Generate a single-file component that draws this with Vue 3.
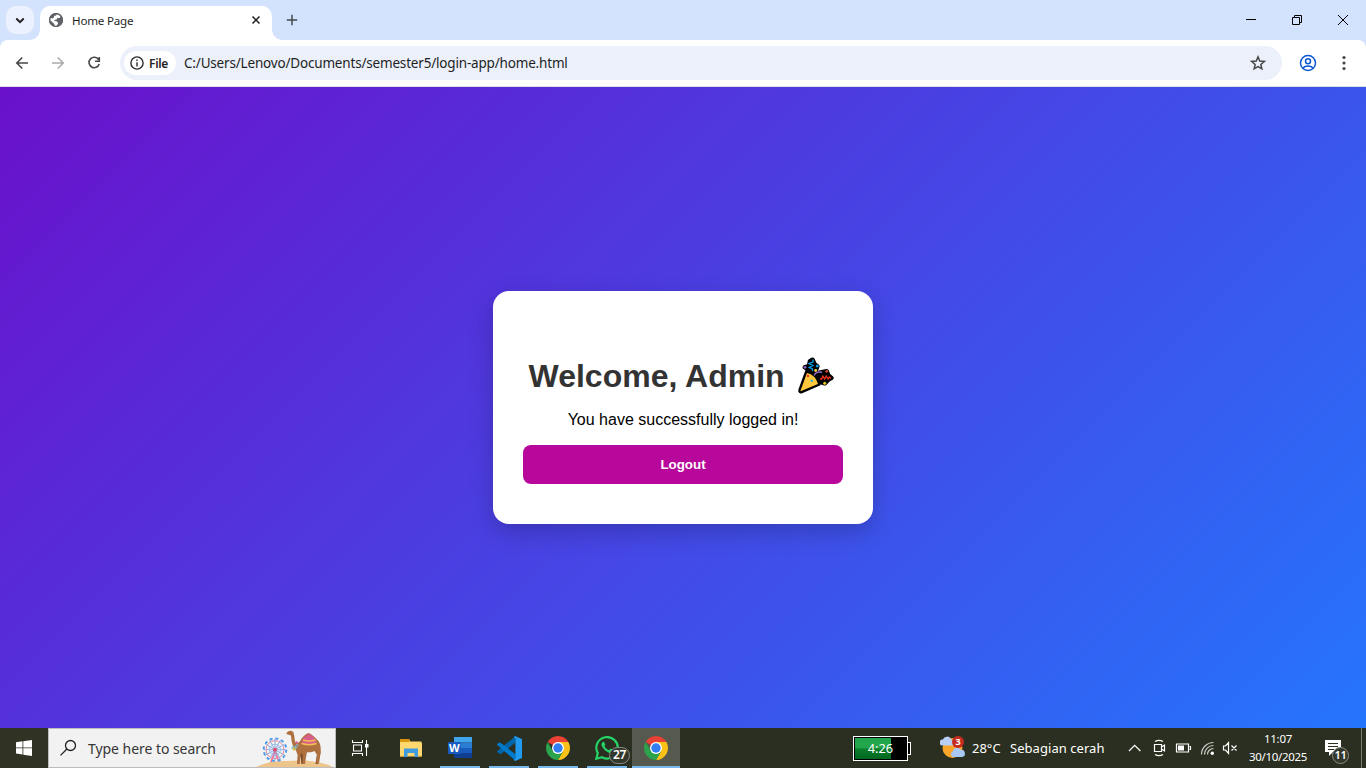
<script setup>
const spokes = Array.from({ length: 12 }, (_, i) => i * 30)
</script>

<template>
  <div class="screen">
    <header class="tabstrip">
      <button class="tabsearch"><svg width="28" height="34" viewBox="0 0 28 34"><path d="M10.300 15.500l3.700 3.700 3.700-3.700" fill="none" stroke="#1f1f1f" stroke-width="1.900" /></svg></button>
      <div class="tab">
        <svg class="globe" width="16" height="16" viewBox="0 0 16 16"><circle cx="8" cy="8" r="7" fill="#5f6368" /><path d="M9.4 1.8l3.3 2-1 2.1-2.4.2-.9 1.6-2 .1.1 1.3 2.1.1 1.5 1.5-.7 2-1.6 1.9-1.4-.2.1-2.2-1.5-1.4L1.9 8l.6-2 2 .5 1.6-1.3-.1-1.3 2-.3z" fill="#fff" /><circle cx="8" cy="8" r="6.4" fill="none" stroke="#5f6368" stroke-width="1.3" /></svg>
        <span class="tabtitle">Home Page</span>
        <svg class="tabclose" width="10" height="10" viewBox="0 0 10 10"><path d="M1.500 1.500l7 7M8.500 1.500l-7 7" stroke="#1f1f1f" stroke-width="1.500" /></svg>
      </div>
      <svg class="plus" width="12" height="12" viewBox="0 0 12 12"><path d="M6 .8v10.400M.8 6h10.400" stroke="#45494e" stroke-width="1.500" /></svg>
      <div class="winctl">
        <svg width="46" height="40" viewBox="0 0 46 40"><path d="M18 19.500h10" stroke="#000" /></svg>
        <svg width="46" height="40" viewBox="0 0 46 40"><path d="M18.500 17.500h7v7h-7zM20.500 17.500v-2h7v7h-2" fill="none" stroke="#000" /></svg>
        <svg width="46" height="40" viewBox="0 0 46 40"><path d="M18 15l10 10M28 15L18 25" stroke="#000" /></svg>
      </div>
    </header>

    <nav class="toolbar">
      <svg class="nav" width="36" height="46" viewBox="0 0 36 46"><path d="M28 23H17M22.300 17.500L16.800 23l5.500 5.500" transform="translate(-4 0)" fill="none" stroke="#474747" stroke-width="1.600" /></svg>
      <svg class="nav" width="36" height="46" viewBox="0 0 36 46"><path d="M12 23h11M17.700 17.500L23.200 23l-5.500 5.500" fill="none" stroke="#ababab" stroke-width="1.600" /></svg>
      <svg class="nav" width="36" height="46" viewBox="0 0 36 46"><path d="M22.600 19.700A5.200 5.200 0 1 0 23.200 24M23.300 17v4.300H19" fill="none" stroke="#474747" stroke-width="1.600" /></svg>
      <div class="omnibox">
        <div class="chip">
          <svg width="14" height="14" viewBox="0 0 14 14"><circle cx="7" cy="7" r="6.100" fill="none" stroke="#2b2b2b" stroke-width="1.400" /><path d="M7 6.200v4.200M7 3.500v1.500" stroke="#2b2b2b" stroke-width="1.400" /></svg>
          <span>File</span>
        </div>
        <span class="url">C:/Users/Lenovo/Documents/semester5/login-app/home.html</span>
        <svg class="star" width="16" height="16" viewBox="0 0 16 16"><path d="M8 1.900l1.750 4.150 4.500.4-3.400 2.950 1 4.400L8 11.500l-3.850 2.300 1-4.400-3.400-2.950 4.500-.4z" fill="none" stroke="#474747" stroke-width="1.500" /></svg>
      </div>
      <svg class="person" width="18" height="18" viewBox="0 0 18 18"><g fill="none" stroke="#0b57d0" stroke-width="1.500"><circle cx="9" cy="9" r="7.500" /><circle cx="9" cy="7.300" r="2.500" /><path d="M3.700 14.200c1.400-1.500 3.200-2.200 5.300-2.200s3.900.7 5.300 2.200" /></g></svg>
      <svg class="dots" width="4" height="16" viewBox="0 0 4 16"><g fill="#474747"><circle cx="2" cy="2.500" r="1.600" /><circle cx="2" cy="8" r="1.600" /><circle cx="2" cy="13.500" r="1.600" /></g></svg>
    </nav>

    <main class="page">
      <section class="card">
        <h1>Welcome, Admin <svg class="party" width="37" height="38" viewBox="0 0 37 38">
          <g stroke="#000" stroke-linejoin="round" stroke-linecap="round" fill="#000">
            <path d="M8 10.300l4-1 1-5 2.500-1.500 2 4.500 2.800 2-1.600 4.400-4 2z" stroke-width="4.600" />
            <path d="M18 18l5.500-2.600 6.200-1.100 1.500 4L34.300 21l-2.800 1.300-3.800 4-4.500-1.500z" stroke-width="4.600" />
            <path d="M9.200 14.500L2.500 33c-.5 1.700.7 2.700 2.200 2.100L22.500 27.500C20.500 20.500 15.500 15.500 9.200 14.500z" fill="#ffc83d" stroke-width="2.300" />
          </g>
          <path d="M16 2.500v2.500l-4 1.500 4 2-3.800 2 3.300 1.500v2" fill="none" stroke="#00a6ed" stroke-width="1.300" />
          <path d="M17.200 18.500c.8-2.700 4-4 8-3.300" fill="none" stroke="#8d65c5" stroke-width="1.500" />
          <path d="M23 22h1.700l1.200-2.800 1.800 2.800 1.500-3 1.900 3 1.200-2 1.700 1.500" fill="none" stroke="#f92f20" stroke-width="1.300" />
          <circle cx="8" cy="10.300" r="1.400" fill="#8d65c5" /><circle cx="20.300" cy="9.100" r="1.400" fill="#00a6ed" /><circle cx="18.700" cy="13.500" r="1.400" fill="#fcd53f" /><circle cx="29.700" cy="14.300" r="1.400" fill="#d3462c" /><circle cx="27.700" cy="26.200" r="1.500" fill="#e5cb22" /><circle cx="11" cy="18.900" r="1.200" fill="#f92f20" /><circle cx="14.700" cy="23.800" r="1.200" fill="#26b5dd" />
        </svg></h1>
        <p>You have successfully logged in!</p>
        <button class="logout">Logout</button>
      </section>
    </main>

    <footer class="taskbar">
      <div class="cell start"><svg width="16" height="16" viewBox="0 0 16 16"><path d="M0 2.200L6.500 1.300V7.500H0zM7.300 1.200L16 0v7.500H7.300zM0 8.300h6.500v6.200L0 13.600zM7.300 8.300H16V16l-8.700-1.300z" fill="#fff" /></svg></div>
      <div class="search">
        <svg class="lens" width="18" height="18" viewBox="0 0 18 18"><circle cx="10.500" cy="6.500" r="5" fill="none" stroke="#222" stroke-width="1.300" /><path d="M6.900 10L.5 16.400" stroke="#222" stroke-width="1.300" /></svg>
        <span>Type here to search</span>
        <svg class="scene" width="78" height="38" viewBox="0 0 78 38">
          <path d="M14 36l5-14 5 14" fill="none" stroke="#ef6b8d" stroke-width="1.600" />
          <path d="M0 38c9-4 18-6.500 30-6 12-1 24-1 33 1.500 6 1 11 3 14 4.500z" fill="#edc48a" />
          <g fill="none"><circle cx="19" cy="20.700" r="9" stroke="#ef8a9e" stroke-width="1" /><circle cx="19" cy="20.700" r="5.500" stroke="#8cbdec" stroke-width=".8" /><circle cx="19" cy="20.700" r="11.300" stroke="#4c9deb" stroke-width="2" stroke-dasharray="3 2.920" /><path v-for="a in spokes" :key="a" d="M19 9.700V20" stroke="#7fa4e2" stroke-width=".8" :transform="`rotate(${a} 19 20.700)`" /></g>
          <circle cx="19" cy="20.700" r="2" fill="#e04a6a" />
          <path d="M58 18l3 7-1.500 10h2.500l2.500-11-1-8zM43 20l2.500 15h2.500l-1-13z" fill="#7d4a28" />
          <path d="M30.300 5c.5-2.500 3-3.500 5-3.300l2 1.200 1 4 .7 6c1 2 3 1.500 5-1 2-4 5.500-7 8.500-8 3 1 6 4 9 7 3 3 3.700 8 3 13l-1.500 10.600h-2.800L61 26l-2.500-4c-2 1.200-5 1.500-7.500 1.200l-1 5-1 6.800h-2.600l.3-8-1-3.500-1.500 4-.4 7.500H41l.6-9-1.600-4.500c-3-3-4.700-8-5-15z" fill="#ae703f" />
          <path d="M45.500 14.500c1-5 4-8.500 7.500-9.500 4 1.500 7 4.500 7.500 9.500-5 2-10.500 2-15 0z" fill="#d9608a" /><path d="M47 11c4 1.500 8 1.500 12.500 0M45.600 14.500c5 1.600 10 1.600 15 0" fill="none" stroke="#f0bf55" stroke-width="1.500" />
          <path d="M36 18c2 1.500 4.500.5 5.500-2.500" fill="none" stroke="#7cbcd6" stroke-width="3" stroke-dasharray="2 1" /><circle cx="38" cy="20" r="1.600" fill="#d8c44c" /><circle cx="40.500" cy="13.500" r="1.300" fill="#dc5c8b" />
        </svg>
      </div>
      <div class="cell"><svg width="18" height="16" viewBox="0 0 18 16"><g fill="none" stroke="#fff"><path d="M1.500 0v2.500h10V0M1.500 16v-2.500h10V16M2.500 5h8v6h-8zM15.500 0v16" stroke-width="1.100" /></g><path d="M14 4h3.500v3.500H14z" fill="#fff" /></svg></div>
      <div class="apps">
        <div class="cell"><svg width="24" height="24" viewBox="0 0 24 24"><path d="M1 3.500h9l1.500 2H22.500v15H1z" fill="#ffd667" /><path d="M1 3h9.500v3H1z" fill="#d9970f" /><path d="M1 7h22v13H1z" fill="#ffd96f" /><path d="M5 12.500h14v8.500h-3.500v-4h-7v4H5z" fill="#3e9be0" /><path d="M1 19.500h4v1H1zM19 19.500h4v1h-4z" fill="#f2bd43" /></svg></div>
        <div class="cell open"><svg width="24" height="24" viewBox="0 0 24 24"><path d="M6 1h18v5.500H6z" fill="#41a5ee" /><path d="M6 6.500h18V12H6z" fill="#2b7cd3" /><path d="M6 12h18v5H6z" fill="#185abd" /><path d="M6 17h18v5H6z" fill="#103f91" /><rect y="6" width="12.500" height="12" rx="1" fill="#185abd" /><text x="6.200" y="16" class="wordmark" text-anchor="middle">W</text></svg></div>
        <div class="cell open"><svg width="25" height="25" viewBox="0 0 24 24"><path d="M17.500.2v6.300L3.600 17.600 0 15.600v-1z" fill="#0065a9" /><path d="M0 7.600L2.800 6l15 11.500v6.300L0 8.500z" fill="#007acc" /><path d="M17.500.1L24 3v18l-6.500 2.900-1.500-.8 1.700-1.500V2.200L16 1z" fill="#1f9cf0" /></svg></div>
        <div class="cell open"><svg width="24" height="24" viewBox="0 0 24 24"><path d="M12 12L1.610 6A12 12 0 0 1 22.390 6z" fill="#e94235" /><path d="M12 6h10.390A12 12 0 0 1 12 24l5.200-9z" fill="#fbc116" /><path d="M6.800 15L1.610 6A12 12 0 0 0 12 24l5.200-9z" fill="#2ba24c" /><circle cx="12" cy="12" r="6" fill="#fff" /><circle cx="12" cy="12" r="4.700" fill="#317ef3" /></svg></div>
        <div class="cell open wa"><svg width="24" height="24" viewBox="0 0 24 24"><path d="M1.300 22.700l1.500-5.600A10.700 10.700 0 1 1 7 21.200z" fill="none" stroke="#25d366" stroke-width="2.200" /><path d="M7.400 6.300c.7-.8 1.600-.7 2 .2l.8 1.900c.2.500-.2 1.100-.8 1.700 1 2 2.500 3.400 4.500 4.200l1.100-1.300c.3-.4.7-.4 1.200-.2l2 1c.8.4.3 2.100-.7 2.800-1.700 1.200-5.200-.1-7.800-2.700-2.800-2.700-4.300-5.600-2.300-7.600z" fill="#25d366" /></svg><span class="count">27</span></div>
        <div class="cell open active"><svg width="24" height="24" viewBox="0 0 24 24"><path d="M12 12L1.610 6A12 12 0 0 1 22.390 6z" fill="#e94235" /><path d="M12 6h10.390A12 12 0 0 1 12 24l5.200-9z" fill="#fbc116" /><path d="M6.800 15L1.610 6A12 12 0 0 0 12 24l5.200-9z" fill="#2ba24c" /><circle cx="12" cy="12" r="6" fill="#fff" /><circle cx="12" cy="12" r="4.700" fill="#317ef3" /></svg></div>
      </div>
      <div class="battery"><div class="shell"><span>4:26</span></div><i></i></div>
      <div class="weather">
        <svg width="26" height="24" viewBox="0 0 26 24"><circle cx="12.500" cy="12" r="10" fill="#f8a52b" /><path d="M2.500 9.500a3 3 0 0 1 .4-6 4.500 4.500 0 0 1 8-.8l2 2v4.800z" fill="#b8cef5" /><path d="M13 21a3 3 0 0 1 0-5.700 4 4 0 0 1 7.500-1.500 3.500 3.500 0 1 1 1.500 7.200z" fill="#a9c8f5" /><circle cx="18" cy="6" r="6" fill="#c52b1e" /><text x="18" y="9.300" class="alertnum" text-anchor="middle">3</text></svg>
        <span class="temp">28°C</span><span class="desc">Sebagian cerah</span>
      </div>
      <div class="tray">
        <svg width="112" height="18" viewBox="0 0 112 18"><g fill="none" stroke="#fff" stroke-width="1.200">
          <path d="M1 12l5.700-5.700 5.700 5.700" />
          <path d="M26.500 5.500h7v7h-7zM33.500 8l3-2v6l-3-2M27 2.500c2.500-1.500 5.500-1.500 8 0M27 15.500c2.500 1.500 5.500 1.500 8 0" />
          <path d="M48.500 5h12v8h-12zM61.500 7.500h1v3h-1" />
          <g stroke="#c9cbc5"><path d="M73.500 15.500A12 12 0 0 1 85.500 3.500M76.500 15.500A9 9 0 0 1 85.500 6.500M79.500 15.500a6 6 0 0 1 6-6" /></g>
          <path d="M95.500 7h2l3-3.500v11L97.500 11h-2zM103.500 6.500l5 5M108.500 6.500l-5 5" />
        </g><path d="M50 6.500h6v5h-6z" fill="#fff" /><circle cx="84.300" cy="14.200" r="1.700" fill="#fff" /></svg>
      </div>
      <div class="clock"><span class="time">11:07</span><span class="date">30/10/2025</span></div>
      <div class="notify"><svg width="18" height="18" viewBox="0 0 18 18"><path d="M1 1h16v12H9l-4 4v-4H1z" fill="#fff" /><path d="M4 4.500h10M4 7.500h10M4 10.500h6" stroke="#2b3020" /></svg><span class="count">11</span></div>
      <div class="peek"></div>
    </footer>
  </div>
</template>

<style>
html, body { margin: 0; overflow: hidden; }
</style>

<style scoped>
* { box-sizing: border-box; }
svg { display: block; flex: none; }
button { border: 0; padding: 0; font: inherit; }
.screen { position: relative; z-index: 0; width: 1366px; height: 768px; display: flex; flex-direction: column; overflow: hidden; font-family: "Noto Sans", "Open Sans", sans-serif; white-space: nowrap; }
.tabstrip { height: 40px; background: #d3e2fd; display: flex; align-items: center; }
.tabsearch { width: 28px; height: 28px; margin-left: 6px; border-radius: 10px; background: #ebf1fe; display: flex; align-items: center; }
.tabsearch svg { margin-top: -1px; }
.tab { position: relative; margin-left: 6px; width: 232px; height: 34px; align-self: flex-end; background: #fff; border-radius: 10px 10px 0 0; display: flex; align-items: center; padding: 0 11px 6px 8px; }
.tab::before, .tab::after { content: ""; position: absolute; bottom: 0; width: 10px; height: 10px; }
.tab::before { left: -10px; background: radial-gradient(circle at 0 0, transparent 9.500px, #fff 10px); }
.tab::after { right: -10px; background: radial-gradient(circle at 100% 0, transparent 9.500px, #fff 10px); }
.tabtitle { margin-left: 8px; font-size: 11.600px; color: #1f1f1f; letter-spacing: -0.2px; }
.tabclose { margin-left: auto; }
.plus { margin-left: 14px; }
.winctl { margin-left: auto; display: flex; }
.toolbar { position: relative; height: 47px; background: #fff; box-shadow: inset 0 -1px #dcdfe3; border-radius: 8px 8px 0 0; display: flex; align-items: center; padding: 0 20px 1px 4px; }
.toolbar::before { content: ""; position: absolute; inset: 0; z-index: -1; background: #d3e2fd; }
.omnibox { margin-left: 8px; width: 1162px; height: 34px; border-radius: 17px; background: #ebf0fa; display: flex; align-items: center; padding: 0 16px 0 4px; }
.chip { width: 52px; height: 24px; border-radius: 12px; background: #fff; display: flex; align-items: center; padding-left: 6px; gap: 5px; font-size: 12px; font-weight: 600; letter-spacing: -0.300px; color: #1f1f1f; }
.url { margin-left: 8px; font-size: 13.500px; letter-spacing: -0.180px; color: #1f1f1f; }
.star { margin-left: auto; }
.person { margin-left: 17px; }
.dots { margin-left: auto; }
.page { height: 641px; background: linear-gradient(135deg, #6a11cb, #2575fc); display: flex; align-items: center; justify-content: center; font-family: "Liberation Sans", Arial, sans-serif; }
.card { width: 380px; height: 233px; background: #fff; border-radius: 16px; box-shadow: 0 8px 25px rgba(0, 0, 0, .2); padding: 61px 30px 40px; display: flex; flex-direction: column; }
h1 { margin: 0; height: 48px; font-size: 32px; line-height: 48px; color: #333; text-align: center; display: flex; justify-content: center; white-space: pre; }
.party { margin: 5px 3.500px 0 3.500px; }
p { margin: 11px 0 0; height: 18px; font-size: 16px; line-height: 18px; color: #000; text-align: center; }
.logout { margin-top: auto; height: 39px; border-radius: 8px; background: #b8079b; color: #fff; font-size: 13.333px; font-weight: 700; }
.taskbar { height: 40px; background: #2a2f21; display: flex; align-items: center; color: #fff; }
.cell { width: 48px; height: 40px; display: flex; align-items: center; justify-content: center; position: relative; flex: none; }
.start { background: #303224; }
.search { width: 288px; height: 40px; background: #f2f2f2; border: 1px solid #bdbdbd; display: flex; align-items: center; padding-left: 11px; color: #363636; font-size: 14px; flex: none; }
.search span { margin-left: 10px; width: 160px; letter-spacing: -0.050px; }
.scene { margin-left: 8px; }
.apps { display: flex; gap: 1px; margin-left: 3px; }
.open::after { content: ""; position: absolute; left: 4px; right: 4px; bottom: 0; height: 2px; background: #76b9ed; }
.active { background: #565a4e; }
.active::after { left: 0; right: 0; }
.wordmark { font: 700 11px "Open Sans", sans-serif; fill: #fff; }
.alertnum { font: 700 9px "Open Sans", sans-serif; fill: #fff; }
.count { position: absolute; left: 26px; top: 19px; width: 21px; height: 17px; border-radius: 9px; border: 1px solid #8b8e86; background: #33372c; font-size: 12px; font-weight: 600; line-height: 14px; letter-spacing: -0.300px; text-align: center; }
.battery { margin-left: 173px; display: flex; align-items: center; }
.shell { width: 55px; height: 25px; border: 1px solid #fff; background: linear-gradient(90deg, transparent 36px, #000 36px), linear-gradient(#22a54b 0 45%, #087c2b 55%, #00681f); background-origin: content-box; background-color: #000; background-clip: content-box; padding: 1px; font-size: 12.800px; line-height: 21px; text-align: center; }
.shell, .battery i { box-shadow: inset 0 0 0 1px #000; }
.battery i { width: 3px; height: 13px; border: 1px solid #fff; border-left: 0; background: #000; }
.weather { margin-left: 29px; display: flex; align-items: center; font-size: 13px; }
.temp { margin-left: 6px; width: 38px; }
.desc { width: 98px; letter-spacing: 0.050px; }
.tray { margin-left: 20px; }
.clock { margin-left: 8px; width: 60px; display: flex; flex-direction: column; align-items: center; font-size: 11.500px; line-height: 18px; letter-spacing: -0.300px; position: relative; }
.time { margin-top: -1px; }
.notify { position: relative; margin-left: 16px; width: 37px; height: 40px; padding-top: 11px; }
.notify .count { left: 8px; top: 19px; width: 17px; font-size: 11px; }
.peek { width: 1px; height: 40px; background: #777b70; }
</style>
